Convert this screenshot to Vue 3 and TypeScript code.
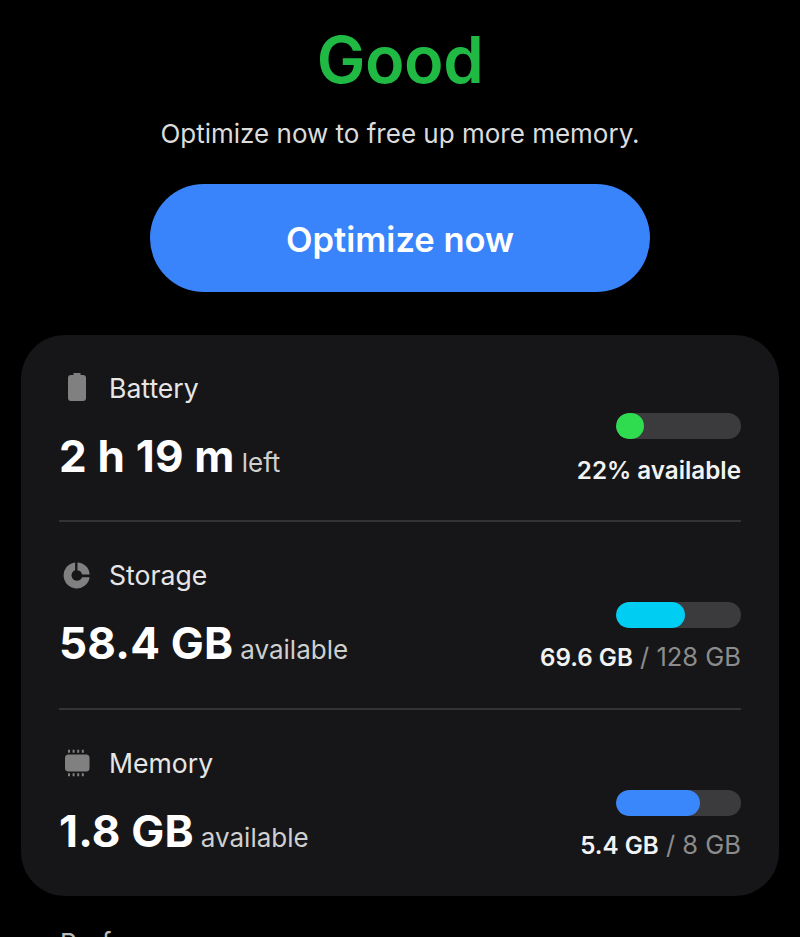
<script setup lang="ts">
interface Row { key: string; label: string; value: string; unit: string; color: string; pct: number; strong: string; rest: string }
const rows: Row[] = [
  { key: 'battery', label: 'Battery', value: '2 h 19 m', unit: 'left', color: '#2fdc4f', pct: 22, strong: '22% available', rest: '' },
  { key: 'storage', label: 'Storage', value: '58.4 GB', unit: 'available', color: '#00cdf2', pct: 55, strong: '69.6 GB', rest: ' / 128 GB' },
  { key: 'memory', label: 'Memory', value: '1.8 GB', unit: 'available', color: '#3a86fb', pct: 67, strong: '5.4 GB', rest: ' / 8 GB' },
]
</script>

<template>
  <main class="page">
    <h1 class="status">Good</h1>
    <p class="hint">Optimize now to free up more memory.</p>
    <button class="optimize">Optimize now</button>
    <section class="card">
      <div v-for="r in rows" :key="r.key" class="row">
        <div class="left">
          <div class="title">
            <span class="icon">
              <svg v-if="r.key === 'battery'" width="24" height="30" viewBox="0 0 24 30">
                <path fill="#808080" d="M8.500 0h7v2h2.500A3 3 0 0 1 21 5v20a3 3 0 0 1-3 3H6a3 3 0 0 1-3-3V5a3 3 0 0 1 3-3h2.500z" />
              </svg>
              <svg v-else-if="r.key === 'storage'" width="28" height="28" viewBox="0 0 30 30">
                <path fill="#808080" d="M13 1.500v8.400a5.800 5.800 0 1 0 7.400 7.400h8.100A14 14 0 1 1 13 1.500z" />
                <path fill="#808080" d="M15.500 1.500A13.500 13.500 0 0 1 28.500 14.500h-8A5.800 5.800 0 0 0 15.500 9.800z" />
              </svg>
              <svg v-else width="30" height="30" viewBox="0 0 30 30">
                <rect x="3" y="6.500" width="24.500" height="17" rx="3.500" fill="#808080" />
                <path stroke="#808080" stroke-width="3" stroke-dasharray="2 2.600" d="M6 3.200h18M6 26.800h18" />
              </svg>
            </span>
            <span class="label">{{ r.label }}</span>
          </div>
          <div class="amount">
            <span class="value">{{ r.value }}</span>
            <span class="unit">{{ r.unit }}</span>
          </div>
        </div>
        <div class="right">
          <div class="track">
            <div class="fill" :style="{ width: r.pct + '%', background: r.color }"></div>
          </div>
          <div class="usage"><b>{{ r.strong }}</b><span v-if="r.rest">{{ r.rest }}</span></div>
        </div>
      </div>
    </section>
    <div class="next">Performance</div>
  </main>
</template>

<style scoped>
.page {
  width: 800px;
  height: 937px;
  overflow: hidden;
  background: #000;
  color: #fff;
  font-family: Inter, "Noto Sans", sans-serif;
  display: flex;
  flex-direction: column;
  align-items: center;
  box-sizing: border-box;
  padding-top: 24px;
}
.status {
  flex: none;
  margin: 0;
  font-size: 65px;
  line-height: 72px;
  font-weight: 600;
  color: #1fb944;
  letter-spacing: -0.5px;
}
.hint {
  flex: none;
  margin: 22px 0 0;
  font-size: 26px;
  line-height: 32px;
  color: #dcdcdc;
  font-weight: 400;
}
.optimize {
  flex: none;
  margin-top: 34px;
  width: 500px;
  height: 108px;
  border: 0;
  padding: 4px 0 0;
  border-radius: 54px;
  background: #3a84fb;
  color: #fff;
  font: 600 34.5px/40px Inter, sans-serif;
}
.card {
  margin-top: 43px;
  width: 758px;
  height: 561px;
  flex: none;
  box-sizing: border-box;
  background: #161618;
  border-radius: 44px;
  padding: 0 38px;
  display: flex;
  flex-direction: column;
}
.row {
  height: 188px;
  flex: none;
  box-sizing: border-box;
  display: flex;
  justify-content: space-between;
  border-bottom: 2px solid #333335;
  padding-top: 33px;
}
.row:first-child { height: 187px; }
.row:last-child { border-bottom: 0; }
.title { display: flex; align-items: center; height: 40px; }
.icon { width: 36px; height: 30px; margin-right: 14px; display: flex; justify-content: center; align-items: center; }
.label { font-size: 26.6px; line-height: 40px; color: #e6e6e6; }
.amount { margin-top: 21px; display: flex; align-items: baseline; gap: 7px; }
.value { font-size: 44px; line-height: 54px; font-weight: 700; color: #fff; letter-spacing: 0.2px; }
.unit { font-size: 26px; line-height: 32px; color: #cfcfcf; }
.right { display: flex; flex-direction: column; align-items: flex-end; padding-top: 47px; }
.row:first-child .right { padding-top: 45px; }
.track { width: 125px; height: 26px; border-radius: 13px; background: #3b3b3e; overflow: hidden; }
.fill { height: 100%; border-radius: 13px; }
.usage { margin-top: 13px; font-size: 25.5px; line-height: 32px; color: #8c8c8c; white-space: pre; }
.row:first-child .usage { margin-top: 15px; }
.usage b { color: #f2f2f2; font-weight: 600; font-size: 24.2px; }
.next { flex: none; width: 100%; padding: 31px 0 0 60px; box-sizing: border-box; font-size: 26px; color: #bbb; }
</style>

<style>
html, body { margin: 0; background: #000; }
</style>
